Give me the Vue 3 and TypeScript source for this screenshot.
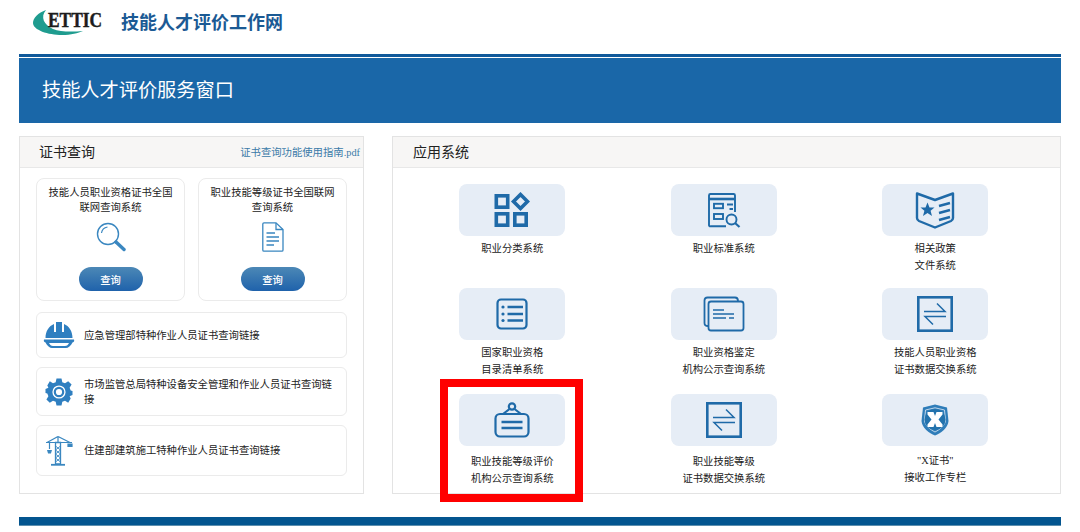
<script setup lang="ts">
interface App { label: string[]; icon: string }
const apps: App[] = [
  { label: ['职业分类系统'], icon: 'grid' },
  { label: ['职业标准系统'], icon: 'standard' },
  { label: ['相关政策', '文件系统'], icon: 'book' },
  { label: ['国家职业资格', '目录清单系统'], icon: 'list' },
  { label: ['职业资格鉴定', '机构公示查询系统'], icon: 'stack' },
  { label: ['技能人员职业资格', '证书数据交换系统'], icon: 'swap' },
  { label: ['职业技能等级评价', '机构公示查询系统'], icon: 'sign' },
  { label: ['职业技能等级', '证书数据交换系统'], icon: 'swap' },
  { label: ['"X证书"', '接收工作专栏'], icon: 'shield' },
]
</script>

<template>
  <div class="page">
    <header class="top">
      <svg class="logo" width="88" height="30" viewBox="32 8 88 30">
        <path fill="#1f9c8f" d="M46 10C38 13 33 18 33 23C33 30 48 35 62 35C71 35 78 33 83 31C72 32 60 32 53 29C44 25 40 17 46 10Z" />
        <text x="48" y="27" textLength="54" lengthAdjust="spacingAndGlyphs" class="logo-text">ETTIC</text>
      </svg>
      <span class="site">技能人才评价工作网</span>
    </header>
    <div class="banner">技能人才评价服务窗口</div>

    <main class="columns">
      <section class="panel left">
        <div class="head">
          <span>证书查询</span>
          <a class="guide">证书查询功能使用指南.pdf</a>
        </div>
        <div class="left-body">
          <div class="cards">
            <div class="card">
              <p>技能人员职业资格证书全国<br />联网查询系统</p>
              <svg class="card-icon" width="30" height="30" viewBox="0 0 30 30" fill="none" stroke="#3a87c0">
                <circle cx="12" cy="12" r="10.5" stroke-width="1.4" />
                <path d="M5.5 11C6 7.5 8.5 5.5 11.5 5" stroke-width="1.2" />
                <path d="M20 20L28 27.5" stroke-width="3.4" stroke-linecap="round" />
              </svg>
              <button class="query">查询</button>
            </div>
            <div class="card">
              <p>职业技能等级证书全国联网<br />查询系统</p>
              <svg class="card-icon" width="30" height="30" viewBox="0 0 30 30" fill="none" stroke="#3a87c0" stroke-width="1.3">
                <path d="M6 .8H18L25 7.5V28A1.2 1.2 0 0 1 23.8 29.2H6A1.2 1.2 0 0 1 4.8 28V2A1.2 1.2 0 0 1 6 .8Z" />
                <path d="M18 1V7.5H25" />
                <path d="M8.5 11H17M8.5 15H21M8.5 19H21M8.5 23H16" />
              </svg>
              <button class="query">查询</button>
            </div>
          </div>
          <a class="link h46">
            <svg width="32" height="28" viewBox="0 0 32 28">
              <path fill="#2f7fc0" d="M2.5 17C2.5 10 6 5 11 3V11H13V1H19V11H21V3C26 5 29.5 10 29.5 17Z" />
              <path fill="#2f7fc0" d="M1 18.5H31C31.5 20 31 21 29.5 21.5C28 25 25 27 23 27H9C7 27 4 25 2.5 21.5C1 21 .5 20 1 18.5ZM6 22C7 24 8 25 10 25H22C24 25 25 24 26 22Z" />
            </svg>
            <span>应急管理部特种作业人员证书查询链接</span>
          </a>
          <a class="link h49">
            <svg width="32" height="28" viewBox="0 0 28 28">
              <path fill="#2f7fc0" d="M11.5 .5H16.5L17.3 4.2L20 5.3L23.2 3.2L26.6 6.6L24.6 9.8L25.7 12.5L27.5 13V17L24.6 18.2L25.7 20.5L23.2 24.8L20 22.7L17.3 23.8L16.5 27.5H11.5L10.7 23.8L8 22.7L4.8 24.8L1.4 21.4L3.4 18.2L2.3 15.5L.5 15V11L3.4 9.8L2.3 7.5L4.8 3.2L8 5.3L10.7 4.2Z" />
              <circle cx="14" cy="14" r="6.6" fill="#fff" />
              <circle cx="14" cy="14" r="4.2" fill="none" stroke="#2f7fc0" stroke-width="2.2" />
            </svg>
            <span>市场监管总局特种设备安全管理和作业人员证书查询链接</span>
          </a>
          <a class="link h51">
            <svg width="32" height="30" viewBox="0 0 28 30" fill="none" stroke="#3a87c0" stroke-width="1.2">
              <path d="M1 6.500H27M13 .5L2 6.500M13 .5L25 6.500M13 .5V6.500" />
              <path d="M10.500 6.500H15.500L15.500 28H10.500Z" stroke-width="1.300" />
              <path d="M10.500 10L15.500 14L10.500 18L15.500 22L10.500 26M15.500 10L10.500 14L15.500 18L10.500 22L15.500 26" stroke-width=".9" />
              <path d="M4.500 6.500V13" />
              <path d="M2.800 14.500H6.200L5.500 17H3.500Z" fill="#3a87c0" />
              <path d="M23 8H27V10.500H23Z" fill="#3a87c0" />
              <path d="M6 28.800H20" stroke-width="1.800" />
            </svg>
            <span>住建部建筑施工特种作业人员证书查询链接</span>
          </a>
        </div>
      </section>

      <section class="panel right">
        <div class="head head-right"><span>应用系统</span></div>
        <div class="apps">
          <div v-for="(app, i) in apps" :key="i" class="app">
            <div class="tile">
              <svg v-if="app.icon === 'grid'" width="36" height="36" viewBox="0 0 36 36" fill="none" stroke="#1f6aa8" stroke-width="3.6">
                <rect x="2.3" y="3.8" width="11.4" height="11.4" />
                <rect x="2.3" y="21.8" width="11.4" height="11.4" />
                <rect x="20.8" y="21.8" width="11.4" height="11.4" />
                <path d="M26.5 2.5L33.5 9.5L26.5 16.5L19.5 9.5Z" />
              </svg>
              <svg v-else-if="app.icon === 'standard'" width="36" height="36" viewBox="0 0 36 36" fill="none" stroke="#1f6aa8" stroke-width="1.9">
                <path d="M29 20V3.5A1.5 1.5 0 0 0 27.5 2H4.5A1.5 1.5 0 0 0 3 3.5V33A1.2 1.2 0 0 0 4.5 34.3H20" />
                <path d="M3 7H29" stroke-width="2.6" />
                <rect x="8" y="11.8" width="9" height="4.4" />
                <rect x="8" y="22" width="9" height="5" />
                <path d="M21 12.5H27M23.5 17H27" />
                <circle cx="25.5" cy="27.5" r="5" />
                <path d="M29 31L33.5 35" stroke-width="2.2" />
              </svg>
              <svg v-else-if="app.icon === 'book'" width="40" height="38" viewBox="0 0 40 38" fill="none" stroke="#1f6aa8" stroke-width="2.4" stroke-linejoin="round">
                <path d="M2 2.5L20 9L38 2.5V27C38 29 37 29.5 36 30L20 36.5L4 30C3 29.5 2 29 2 27Z" />
                <path d="M24 15L35 12M24 22L35 19M24 29L35 26" stroke-width="2.6" />
                <path fill="#1f6aa8" stroke="none" d="M12.5 11.5L14.5 16.5L19.5 16.6L15.6 19.8L17 25L12.5 22L8 25L9.4 19.8L5.5 16.6L10.5 16.5Z" />
              </svg>
              <svg v-else-if="app.icon === 'list'" width="32" height="32" viewBox="0 0 32 32" fill="none" stroke="#1f6aa8" stroke-width="2.2">
                <rect x="1.5" y="1.5" width="29" height="29" rx="3.5" />
                <path d="M11.5 9H27M11.5 16H27M11.5 22.5H27" stroke-width="2.4" />
                <circle cx="7" cy="9" r="1.6" fill="#1f6aa8" stroke="none" />
                <circle cx="7" cy="16" r="1.6" fill="#1f6aa8" stroke="none" />
                <circle cx="7" cy="22.5" r="1.6" fill="#1f6aa8" stroke="none" />
              </svg>
              <svg v-else-if="app.icon === 'stack'" width="42" height="36" viewBox="0 0 42 36" fill="none" stroke="#1f6aa8" stroke-width="1.8">
                <path d="M5 30C2.500 30 1.500 29 1.500 27V4.500C1.500 2.500 2.500 1.500 4.500 1.500H32C34 1.500 35 2.500 35 5" />
                <rect x="5.500" y="5.500" width="35" height="29" rx="2.500" />
                <path d="M10 14H21M10 18H31M10 22H23M26 22H31" stroke-width="1.6" />
              </svg>
              <svg v-else-if="app.icon === 'swap'" width="36" height="36" viewBox="0 0 36 36" fill="none" stroke="#1f6aa8">
                <rect x="1.300" y="1.300" width="33.400" height="33.400" stroke-width="2.600" />
                <path d="M7 15.500H28L20 7.500M29 20.500H8L16 28.500" stroke-width="1.500" />
              </svg>
              <svg v-else-if="app.icon === 'sign'" width="36" height="36" viewBox="0 0 36 36" fill="none" stroke="#1f6aa8" stroke-width="2.200">
                <circle cx="18" cy="4.500" r="3.200" />
                <path d="M15.500 7L9 12M20.500 7L27 12" />
                <rect x="1.500" y="12" width="33" height="22.500" rx="4.500" />
                <path d="M7.500 20H28.500M7.500 26H28.500" stroke-width="2.400" />
              </svg>
              <svg v-else width="28" height="32" viewBox="0 0 28 32">
                <path fill="#2f7db9" d="M14 .5L26 3.500L27.500 17C27 24 20 29 14 31.500C8 29 1 24 .5 17L2 3.500Z" />
                <path fill="none" stroke="#cfe0ef" stroke-width=".9" d="M14 3.800L23.500 6L24.500 16.500C24 21.500 19 25.500 14 28C9 25.500 4 21.500 3.500 16.500L4.500 6Z" />
                <circle cx="14" cy="15.500" r="10.500" fill="#2272ad" />
                <path fill="#fff" d="M6.500 8H12.500L14 12L15.500 8H21.500V10.500L17.500 15.500L21.500 20.500V23H15.500L14 19L12.500 23H6.500V20.500L10.500 15.500L6.500 10.500Z" />
              </svg>
            </div>
            <div class="label" :class="{ serif: app.icon === 'shield' }">
              <div v-for="line in app.label" :key="line">{{ line }}</div>
            </div>
          </div>
        </div>
        <div class="mark"></div>
      </section>
    </main>
    <footer class="foot"></footer>
  </div>
</template>

<style>
html, body { margin: 0; background: #fff; }
</style>

<style scoped>
.page {
  width: 1042px;
  height: 532px;
  padding-left: 19px;
  font-family: "Noto Sans CJK SC", sans-serif;
  color: #222;
  overflow: hidden;
}
.top {
  height: 54px;
  display: flex;
  align-items: flex-start;
  margin-left: 13px;
}
.logo { margin-top: 8px; flex: none; }
.logo-text {
  font-family: "Liberation Serif", serif;
  font-weight: 700;
  font-size: 22px;
  fill: #1c1c1c;
  stroke: #1c1c1c;
  stroke-width: .5px;
}
.site {
  margin: 8px 0 0 1px;
  font-size: 18px;
  line-height: 26px;
  font-weight: 700;
  color: #1b5a94;
}
.banner {
  height: 66px;
  border-top: 3px solid #10599a;
  box-shadow: inset 0 1px 0 #fff;
  padding-left: 23px;
  background: #1a67a8;
  color: #fff;
  font-size: 19.200px;
  line-height: 65px;
}
.columns {
  display: flex;
  gap: 28px;
  margin-top: 13px;
  height: 358px;
}
.panel {
  position: relative;
  box-sizing: border-box;
  border: 1px solid #e3e3e3;
  height: 358px;
  background: #fff;
}
.left { width: 345px; }
.right { width: 669px; }
.head {
  height: 31px;
  box-sizing: border-box;
  background: #f7f6f5;
  border-bottom: 1px solid #e8e8e8;
  padding: 0 3px 0 19px;
  display: flex;
  justify-content: space-between;
  align-items: center;
  font-size: 14px;
  color: #222;
}
.head span { padding-bottom: 3px; }
.head-right { padding-left: 20px; }
.guide {
  font-family: "Liberation Serif", "Noto Sans CJK SC", serif;
  font-size: 10.350px;
  color: #3a7aa8;
  white-space: nowrap;
  padding-bottom: 2px;
}
.left-body { padding: 10px 16px 0; }
.cards { display: flex; gap: 13px; }
.card {
  box-sizing: border-box;
  width: 149px;
  height: 123px;
  border: 1px solid #ebebeb;
  border-radius: 8px;
  display: flex;
  flex-direction: column;
  align-items: center;
  padding-top: 6px;
}
.card p {
  margin: 0;
  font-size: 10.330px;
  line-height: 14.500px;
  text-align: center;
  white-space: nowrap;
}
.card-icon { margin-top: 8px; }
.query {
  margin-top: 15px;
  width: 64px;
  height: 24px;
  padding: 0;
  border: 0;
  border-radius: 12px;
  background: linear-gradient(#4c88b6, #1f62ab);
  color: #fff;
  font: 500 10.330px "Noto Sans CJK SC", sans-serif;
}
.link {
  box-sizing: border-box;
  display: flex;
  align-items: center;
  gap: 9px;
  margin: 9px 0 0;
  padding: 0 10px 0 6px;
  border: 1px solid #ebebeb;
  border-radius: 6px;
  font-size: 10.330px;
  line-height: 15px;
}
.link svg { flex: none; }
.link span { padding-bottom: 2px; }
.h46 { margin-top: 11px; height: 46px; }
.h49 { height: 49px; }
.h51 { height: 51px; }
.apps {
  display: grid;
  grid-template-columns: repeat(3, 211.500px);
  grid-template-rows: 104px 106px 92px;
  padding: 16px 0 0 13.500px;
}
.app { display: flex; flex-direction: column; align-items: center; }
.tile {
  flex: none;
  width: 106px;
  height: 52px;
  border-radius: 8px;
  background: #e6edf6;
  display: flex;
  align-items: center;
  justify-content: center;
}
.label {
  margin-top: 3px;
  font-size: 10.330px;
  line-height: 17px;
  text-align: center;
  white-space: nowrap;
}
.app:nth-child(n + 7) .label { margin-top: 6px; }
.serif { font-family: "Liberation Serif", "Noto Sans CJK SC", serif; }
.mark {
  position: absolute;
  left: 47px;
  top: 242px;
  width: 127px;
  height: 107px;
  border: 8px solid #ff0000;
}
.foot {
  margin-top: 23px;
  height: 8px;
  background: #03558f;
  border-bottom: 1px solid #5d8fae;
}
</style>
